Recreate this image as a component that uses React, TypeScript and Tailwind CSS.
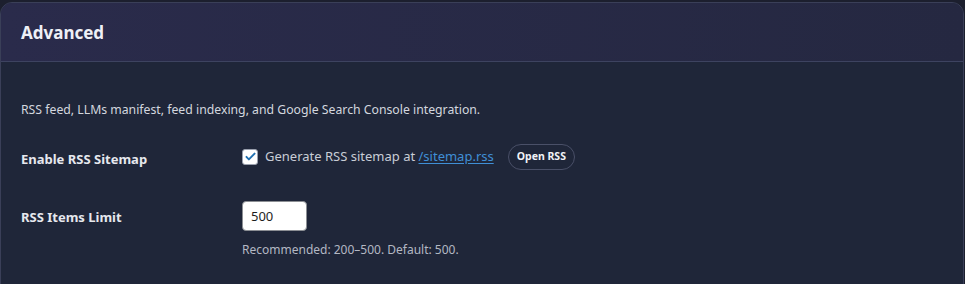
export default function App() {
  return (
    <div
      className="min-h-screen bg-[#1c1f2e] pt-[2px] pr-[1px]"
      style={{ fontFamily: '"Noto Sans", "Open Sans", sans-serif' }}
    >
      <section className="overflow-hidden rounded-t-[12px] border border-[#3a3f58] bg-[#1f2639]">
        <header className="flex h-[59px] items-center border-b border-[#3d4360] bg-gradient-to-r from-[#2a2b4b] to-[#252841] px-5">
          <h2 className="pt-[2px] text-[17px] font-bold text-[#eef0f6]">Advanced</h2>
        </header>

        <div className="px-5 pt-[39px] pb-[30px]">
          <p className="text-[12.25px] text-[#d3d7df]">
            RSS feed, LLMs manifest, feed indexing, and Google Search Console integration.
          </p>

          <div className="mt-[24px] grid grid-cols-[221px_1fr] items-center">
            <div className="pt-[7px] text-[13px] font-bold text-[#e6e8ee]">Enable RSS Sitemap</div>
            <div className="flex items-center">
              <span className="flex h-4 w-4 items-center justify-center rounded-[3px] border border-[#9aa0ae] bg-white">
                <svg viewBox="0 0 16 16" className="h-[13px] w-[13px]">
                  <path d="M3 8.5l3 3 7-7" fill="none" stroke="#2271b1" strokeWidth="2.4" strokeLinecap="round" strokeLinejoin="round" />
                </svg>
              </span>
              <span className="ml-[7px] text-[13px] text-[#c9cdd6]">
                Generate RSS sitemap at{" "}
                <a href="#" className="text-[#3f8fd6] underline underline-offset-2">/sitemap.rss</a>
              </span>
              <button className="ml-[14px] h-[26px] rounded-full border border-[#4a5068] bg-[#1f2639] px-[8px] text-[10.5px] font-bold text-[#f1f2f6]">
                Open RSS
              </button>
            </div>
          </div>

          <div className="mt-[31px] grid grid-cols-[221px_1fr]">
            <div className="pt-[7px] text-[13px] font-bold text-[#e6e8ee]">RSS Items Limit</div>
            <div>
              <input
                defaultValue="500"
                className="h-[30px] w-[65px] rounded-[4px] border border-[#8c8f94] bg-white px-2 text-[13px] text-[#1e1e1e] outline-none"
              />
              <p className="mt-[10px] text-[12px] text-[#b3b8c3]">Recommended: 200–500. Default: 500.</p>
            </div>
          </div>
        </div>
      </section>
    </div>
  );
}
